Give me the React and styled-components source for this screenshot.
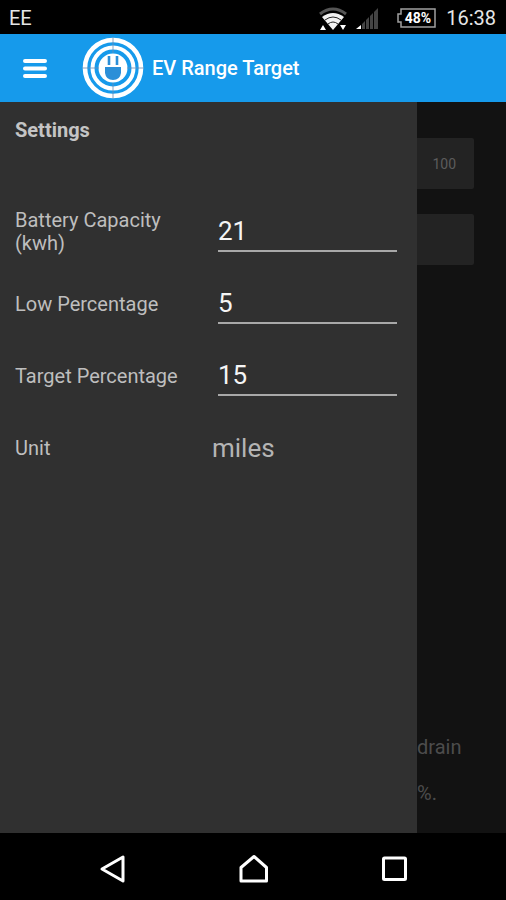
import React from "react";
import styled, { createGlobalStyle } from "styled-components";

const settings = [
  { id: "capacity", label: "Battery Capacity (kwh)", value: "21" },
  { id: "low", label: "Low Percentage", value: "5" },
  { id: "target", label: "Target Percentage", value: "15" },
];

function StatusIcons() {
  return (
    <svg width="120" height="34" viewBox="0 0 120 34" aria-hidden="true">
      {/* wifi */}
      <path d="M2 13 Q15 3 28 13" fill="none" stroke="#555" strokeWidth="3" />
      <path d="M4 16 Q15 8 26 16 L15 29 Z" fill="#f2f2f2" />
      <path d="M7 19 Q15 13 23 19 M10 23 Q15 19 20 23" fill="none" stroke="#222" strokeWidth="1" />
      <path d="M2 29 L5 24 L8 29 Z M22 24 L28 24 L25 29 Z" fill="#fff" />
      {/* signal */}
      <path d="M38 28 L43 24 V28 Z" fill="#fff" />
      <path d="M44 23 L47 20 V28 H44 Z M48 19 L51 16 V28 H48 Z M52 15 L55 12 V28 H52 Z M56 11 L60 7 V28 H56 Z" fill="#444" />
      {/* battery */}
      <path d="M83 8 H117 V26 H83 V21 H80 V13 H83 Z" fill="none" stroke="#a0a0a0" strokeWidth="1.5" />
      <text x="100" y="22" textAnchor="middle" fill="#fff" fontFamily="Roboto, sans-serif" fontWeight="700" fontSize="14">
        48%
      </text>
    </svg>
  );
}

function Logo() {
  return (
    <svg width="62" height="62" viewBox="0 0 62 62" aria-hidden="true">
      <g fill="none" stroke="#fff">
        <circle cx="31" cy="31" r="28" strokeWidth="4.6" />
        <circle cx="31" cy="31" r="20.5" strokeWidth="4" />
      </g>
      <circle cx="31" cy="31" r="14.5" fill="#fff" />
      <path d="M27 19 V28 M35 19 V28" stroke="#2b8fd8" strokeWidth="2.6" />
      <path d="M23 30 H39 V36 Q38 43 31 43 Q24 43 23 36 Z" fill="#2b8fd8" />
      <path d="M31 0 V16 M31 46 V62 M0 31 H17 M45 31 H62" stroke="#6a8fb8" strokeWidth="1" opacity="0.8" />
    </svg>
  );
}

function App() {
  return (
    <Screen>
      <GlobalStyle />
      <StatusBar>
        <span>EE</span>
        <StatusRight>
          <StatusIcons />
          <span>16:38</span>
        </StatusRight>
      </StatusBar>
      <Toolbar>
        <MenuButton aria-label="Menu">
          <svg width="24" height="20" viewBox="0 0 24 20">
            <path d="M2 3 H22 M2 10.5 H22 M2 18 H22" stroke="#fff" strokeWidth="4" strokeLinecap="round" />
          </svg>
        </MenuButton>
        <Logo />
        <Title>EV Range Target</Title>
      </Toolbar>
      <Main>
        <Drawer>
          <Heading>Settings</Heading>
          {settings.map((item) => (
            <Row key={item.id}>
              <Label htmlFor={item.id}>{item.label}</Label>
              <Input id={item.id} defaultValue={item.value} inputMode="numeric" />
            </Row>
          ))}
          <Row>
            <Label htmlFor="unit">Unit</Label>
            <Select id="unit" defaultValue="miles">
              <option value="miles">miles</option>
            </Select>
          </Row>
        </Drawer>
        <Behind>
          <Tile>100</Tile>
          <Tile />
          <Note>
            <p>drain</p>
            <p>%.</p>
          </Note>
        </Behind>
      </Main>
      <NavBar>
        <NavButton aria-label="Back">
          <svg width="28" height="30" viewBox="0 0 28 30">
            <path d="M4 15 L25 3 V27 Z" />
          </svg>
        </NavButton>
        <NavButton aria-label="Home">
          <svg width="30" height="30" viewBox="0 0 30 30">
            <path d="M3 13.5 L16 2.5 L28.5 13.5 V27 H3 Z" />
          </svg>
        </NavButton>
        <NavButton aria-label="Recent apps">
          <svg width="28" height="30" viewBox="0 0 28 30">
            <rect x="3.5" y="4" width="22" height="21.5" rx="1" />
          </svg>
        </NavButton>
      </NavBar>
    </Screen>
  );
}

export default App;

const GlobalStyle = createGlobalStyle`
  * {
    box-sizing: border-box;
  }

  body {
    margin: 0;
    background: #000;
    font-family: Roboto, sans-serif;
  }

  button {
    display: flex;
    padding: 0;
    border: 0;
    background: none;
  }
`;

const Screen = styled.div`
  display: flex;
  flex-direction: column;
  min-height: 100vh;
`;

const StatusBar = styled.div`
  display: flex;
  align-items: center;
  justify-content: space-between;
  height: 34px;
  padding: 2px 10px 0 9px;
  background: #000;
  color: #e6e6e6;
  font-size: 20px;
`;

const StatusRight = styled.div`
  display: flex;
  align-items: center;
  gap: 8px;
`;

const Toolbar = styled.header`
  display: flex;
  align-items: center;
  height: 68px;
  padding-left: 23px;
  background: #169aeb;
`;

const MenuButton = styled.button`
  margin-right: 35px;
`;

const Title = styled.h1`
  margin: 0 0 0 8px;
  color: #fff;
  font-size: 20px;
  line-height: 24px;
  font-weight: 500;
`;

const Main = styled.main`
  flex: 1;
  display: flex;
`;

const Drawer = styled.section`
  flex: 1;
  padding: 16px 20px 16px 15px;
  background: #303030;
`;

const Heading = styled.h2`
  margin: 0 0 54px;
  color: #c4c4c4;
  font-size: 20px;
  line-height: 24px;
  font-weight: 700;
`;

const Row = styled.div`
  display: grid;
  grid-template-columns: 1fr 1fr;
  column-gap: 24px;
  align-items: center;
  height: 72px;
`;

const Label = styled.label`
  color: #bebebe;
  font-size: 20px;
  line-height: 23px;
`;

const Input = styled.input`
  width: 100%;
  height: 40px;
  padding: 0;
  border: 0;
  border-bottom: 2px solid #a8a8a8;
  outline: 0;
  background: none;
  color: #f5f5f5;
  font-family: inherit;
  font-size: 26px;
`;

const Select = styled.select`
  appearance: none;
  margin-left: -6px;
  padding: 0;
  border: 0;
  outline: 0;
  background: none;
  color: #b4b4b4;
  font-family: inherit;
  font-size: 26px;
`;

const Behind = styled.aside`
  display: flex;
  flex-direction: column;
  gap: 25px;
  width: 89px;
  padding-top: 36px;
  background: #121212;
  color: #5c5c5c;
`;

const Tile = styled.div`
  display: flex;
  align-items: center;
  justify-content: flex-end;
  height: 51px;
  margin-right: 32px;
  padding-right: 18px;
  border-radius: 0 2px 2px 0;
  background: #232323;
  font-size: 14px;
`;

const Note = styled.div`
  margin-top: auto;
  padding-bottom: 17px;
  color: #4c4c4c;
  font-size: 20px;
  line-height: 46px;

  p {
    margin: 0;
  }
`;

const NavBar = styled.nav`
  display: flex;
  align-items: center;
  justify-content: center;
  gap: 112px;
  height: 67px;
  padding-top: 4px;
  background: #000;
`;

const NavButton = styled.button`
  svg {
    fill: none;
    stroke: #fff;
    stroke-width: 3;
    stroke-linejoin: round;
  }
`;
